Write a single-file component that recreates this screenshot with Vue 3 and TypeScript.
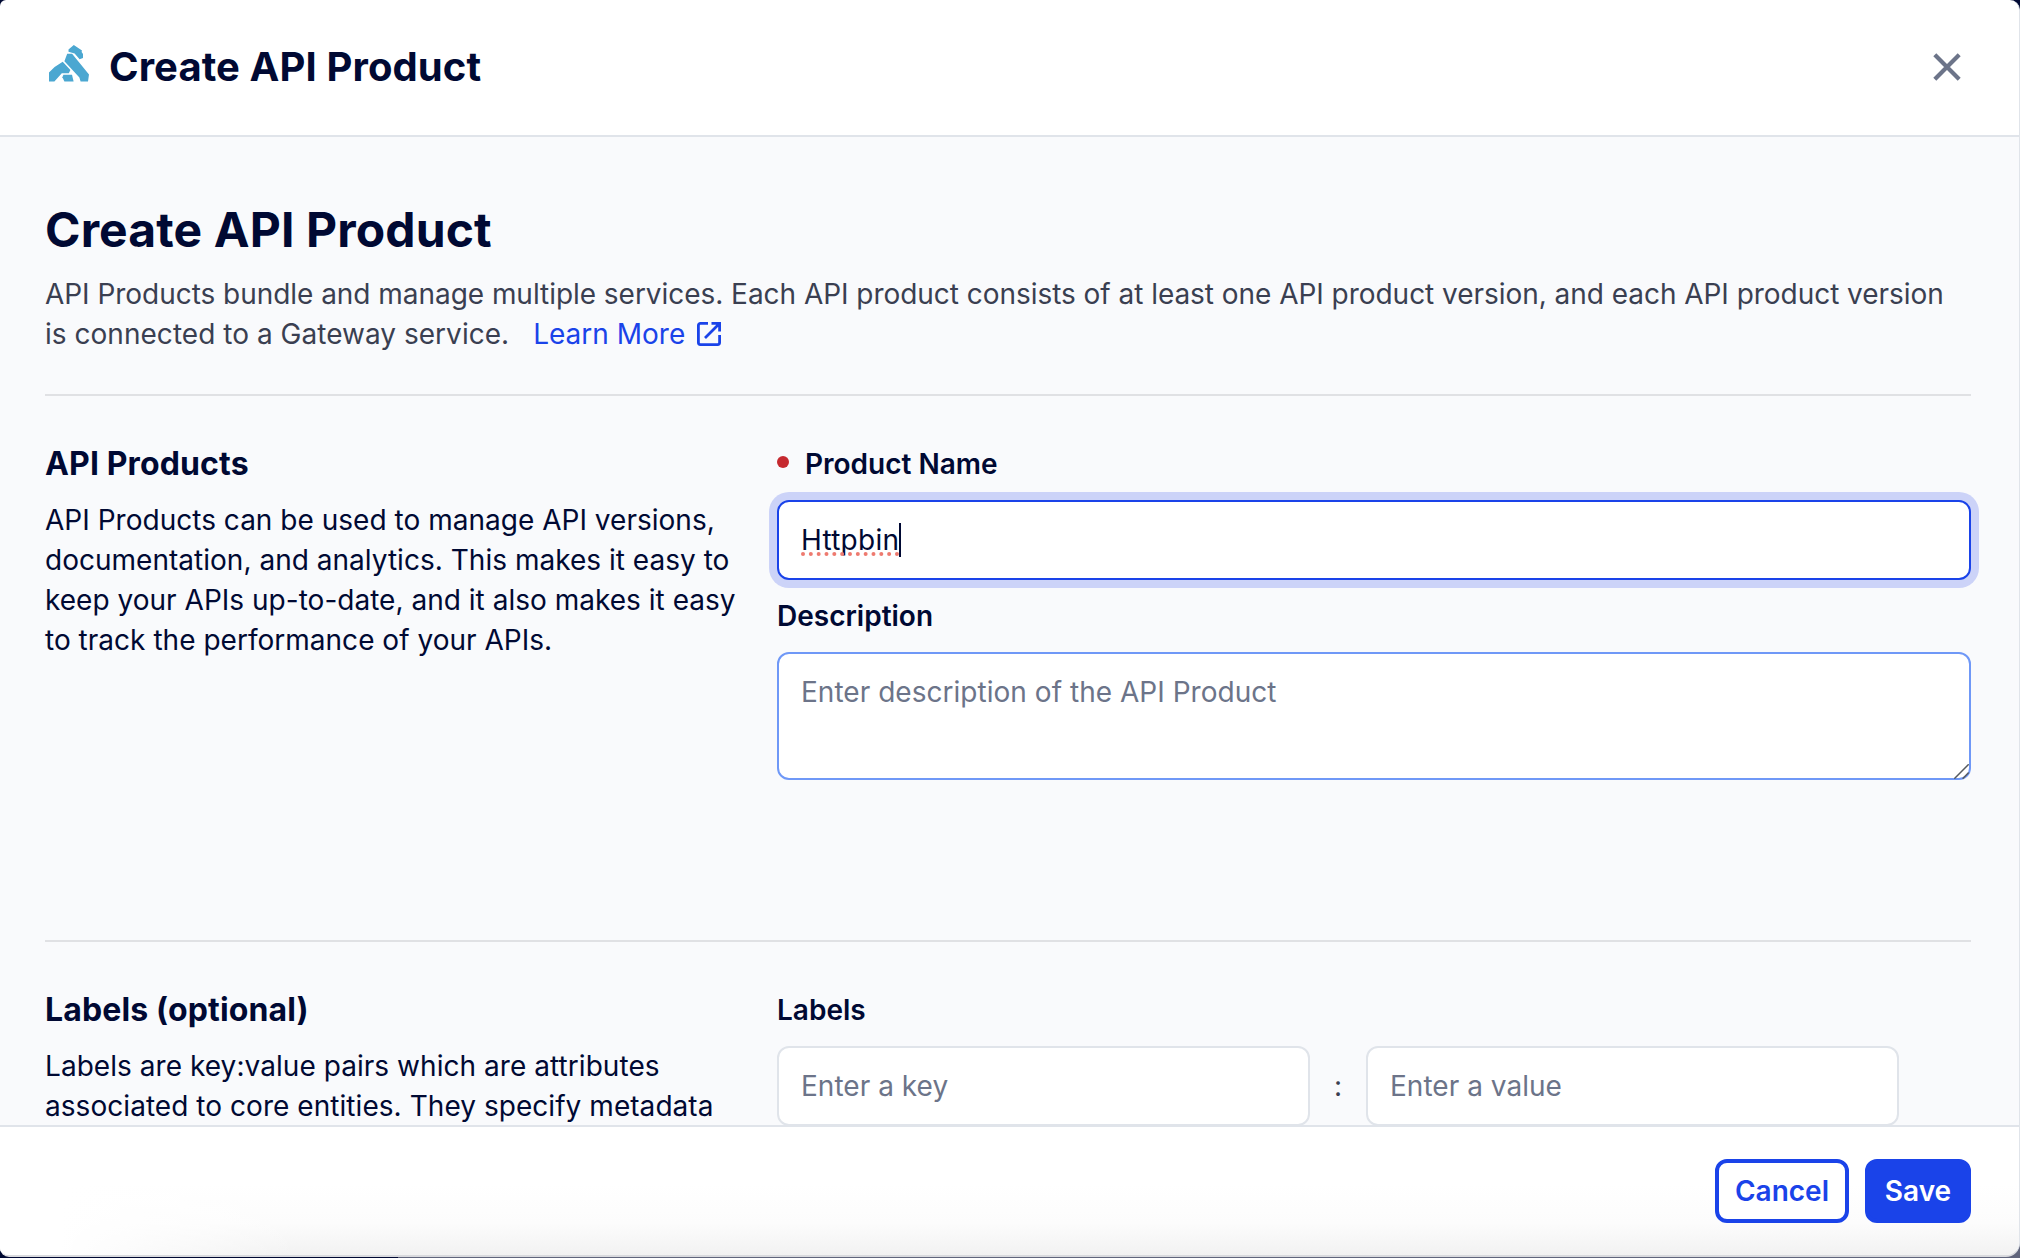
<script setup lang="ts">
import { ref } from 'vue'

const productName = ref('Httpbin')
const description = ref('')
const labelKey = ref('')
const labelValue = ref('')
</script>

<template>
  <div class="backdrop">
    <section class="modal">
      <header class="modal-header">
        <svg class="logo" width="42" height="38" viewBox="0 0 42 38" fill="#4ba7d1">
          <path d="M20.5 4.6 25.8 0 34 5.4 33.6 7 35 9V13L31.6 14.2 26.6 8.6 20.5 6.8Z" />
          <path d="M19.2 8.8H24.1L41 29.6 40 36.4H32.6L31.4 32.4 16.4 16.2Z" />
          <path d="M1 27.6 6.6 22 14.7 16.7 22.4 24.9 20.8 28.2H13.8L6.4 36.4H1Z" />
          <path d="M15.4 29.8H24L25.6 36.4H16.4L14.4 32.2Z" />
        </svg>
        <h1>Create API Product</h1>
        <button class="close" aria-label="Close">
          <svg width="28" height="28" viewBox="0 0 28 28" fill="none" stroke="#6c7489" stroke-width="4.2">
            <path d="M1.8 1.8 26.2 26.2M26.2 1.8 1.8 26.2" />
          </svg>
        </button>
      </header>

      <main class="modal-body">
        <h2>Create API Product</h2>
        <p class="intro">
          <span class="lead">API Products bundle and manage multiple services. Each API product consists of at least one API product version, and each API product version</span>
          <span class="tail">is connected to a Gateway service.<a class="learn">Learn More<svg width="24" height="24" viewBox="0 0 24 24" fill="none" stroke="#1a43e9" stroke-width="2.8">
            <path d="M11 1.4H3.4a2 2 0 0 0-2 2v17.2a2 2 0 0 0 2 2h17.2a2 2 0 0 0 2-2V13M14.5 1.4h8.1V9.5M22 2 8 16" />
          </svg></a></span>
        </p>

        <div class="row first">
          <div class="info">
            <h3>API Products</h3>
            <p>API Products can be used to manage API versions, documentation, and analytics. This makes it easy to keep your APIs up-to-date, and it also makes it easy to track the performance of your APIs.</p>
          </div>
          <div class="fields">
            <label class="required">Product Name</label>
            <div class="control focused">
              <span class="typed">{{ productName }}<svg class="spell" width="100" height="4" viewBox="0 0 100 4"><circle v-for="n in 13" :key="n" :cx="2 + (n - 1) * 7.83" cy="2" r="2" fill="#ee7a6f" /></svg></span><i class="caret" />
            </div>
            <label class="desc-label">Description</label>
            <div class="area-wrap">
              <textarea v-model="description" class="control area" placeholder="Enter description of the API Product" />
              <svg class="grip" width="15" height="15" viewBox="0 0 15 15" fill="none" stroke="#555a5f" stroke-width="1.5">
                <path d="M.3 14.7 14.7 .3M8.6 14.7l6.1-6.1" />
              </svg>
            </div>
          </div>
        </div>

        <div class="row second">
          <div class="info">
            <h3>Labels (optional)</h3>
            <p>Labels are key:value pairs which are attributes associated to core entities. They specify metadata</p>
          </div>
          <div class="fields">
            <label>Labels</label>
            <div class="pair">
              <input v-model="labelKey" class="control" placeholder="Enter a key">
              <span class="colon">:</span>
              <input v-model="labelValue" class="control" placeholder="Enter a value">
            </div>
          </div>
        </div>
      </main>

      <footer class="modal-footer">
        <button class="btn cancel">Cancel</button>
        <button class="btn save">Save</button>
      </footer>
    </section>
  </div>
</template>

<style>
body {
  margin: 0;
  overflow: hidden;
}
</style>

<style scoped>
* {
  box-sizing: border-box;
}
.backdrop {
  height: 1258px;
  background: linear-gradient(90deg, #000933 398px, #60657c 398px);
  background-size: 100% 30px;
  background-position: 0 100%;
  background-repeat: no-repeat;
  background-color: #000933;
  font-family: Inter, "Liberation Sans", sans-serif;
  font-size: 28px;
  line-height: 40px;
  color: #000933;
}
.modal {
  display: flex;
  flex-direction: column;
  height: 1257px;
  border-right: 1px solid #e0e4ea;
  border-bottom: 2px solid #d9dade;
  border-radius: 6px 10px 14px 9px;
  background: #fff;
  overflow: hidden;
}
h1,
h2,
h3,
p {
  margin: 0;
}
.modal-header {
  display: flex;
  align-items: center;
  height: 137px;
  flex: none;
  padding: 0 58px 1px 48px;
  border-bottom: 2px solid #e0e4ea;
}
.logo {
  margin-top: -6px;
}
h1 {
  margin-left: 19px;
  font-size: 40px;
  line-height: 48px;
  font-weight: 700;
  letter-spacing: 0.1px;
}
.close {
  display: flex;
  margin-left: auto;
  padding: 0;
  border: 0;
  background: none;
}
.modal-body {
  flex: 1;
  min-height: 0;
  padding: 63px 48px 0 45px;
  background: #f9fafc;
  overflow: hidden;
}
h2 {
  font-size: 48px;
  line-height: 60px;
  font-weight: 700;
  letter-spacing: 0.12px;
}
.intro {
  margin-top: 14px;
  color: #3a3f51;
}
.lead,
.tail {
  display: block;
  white-space: nowrap;
}
.lead {
  letter-spacing: -0.04px;
}
.tail {
  letter-spacing: 0.03px;
}
.learn {
  margin-left: 24px;
  color: #1a43e9;
  letter-spacing: 0;
}
.learn svg {
  margin-left: 12px;
  vertical-align: -2px;
}
.row {
  display: flex;
  border-top: 2px solid #e0e1e4;
}
.first {
  height: 546px;
  margin-top: 40px;
  padding-top: 48px;
}
.second {
  padding-top: 48px;
}
.info {
  width: 700px;
  margin-right: 32px;
  flex: none;
}
h3 {
  font-size: 32px;
  line-height: 40px;
  font-weight: 700;
  letter-spacing: 0.13px;
}
.info p {
  margin-top: 16px;
  letter-spacing: 0.02px;
}
.second .info p {
  letter-spacing: 0.05px;
}
.fields {
  flex: 1;
  min-width: 0;
}
label {
  display: block;
  font-weight: 600;
}
.required {
  display: flex;
  align-items: center;
}
.required::before {
  content: "";
  width: 12px;
  height: 12px;
  margin: -4px 16px 0 0;
  border-radius: 50%;
  background: #c5292f;
}
.control {
  display: block;
  width: 100%;
  height: 80px;
  padding: 18px 22px;
  border: 2px solid #e0e4ea;
  border-radius: 12px;
  background: #fff;
  font: inherit;
  color: #000933;
  outline: none;
}
.control::placeholder {
  color: #6c7489;
  opacity: 1;
  letter-spacing: 0.03px;
}
.focused {
  display: flex;
  margin-top: 16px;
  border-color: #1a43e9;
  box-shadow: 0 0 0 8px #ccd3f8;
}
.typed {
  position: relative;
  letter-spacing: 0.25px;
}
.spell {
  position: absolute;
  left: 0;
  top: 32px;
}
.caret {
  width: 2px;
  height: 34px;
  margin-top: 3px;
  background: #000933;
}
.desc-label {
  margin-top: 16px;
}
.area-wrap {
  position: relative;
  margin-top: 16px;
}
.area {
  height: 128px;
  border-color: #6f98f7;
  resize: none;
}
.grip {
  position: absolute;
  right: 2px;
  bottom: 1px;
}
.pair {
  display: flex;
  align-items: center;
  margin-top: 16px;
}
.pair .control {
  width: 533px;
}
.colon {
  width: 56px;
  text-align: center;
  color: #3a3f51;
}
.modal-footer {
  display: flex;
  align-items: flex-start;
  justify-content: flex-end;
  gap: 16px;
  height: 130px;
  flex: none;
  padding: 32px 48px 0 0;
  border-top: 2px solid #e0e4ea;
  background:
    linear-gradient(90deg, #fff 60px, #fff0 300px),
    linear-gradient(#fff 45%, #fcfcfc 75%, #f2f2f2);
}
.btn {
  height: 64px;
  border: 4px solid #1a43e9;
  border-radius: 12px;
  padding: 0;
  font: inherit;
  font-weight: 600;
}
.cancel {
  width: 134px;
  background: #fff;
  color: #1a43e9;
}
.save {
  width: 106px;
  background: #1a43e9;
  color: #fff;
}
</style>
